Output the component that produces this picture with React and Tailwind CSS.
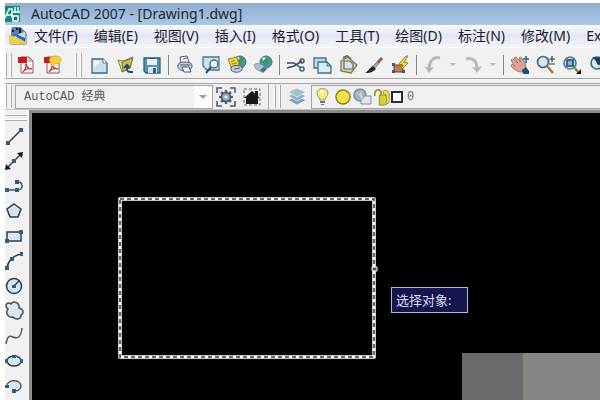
import React from "react";

function Icon({ children, size = "w-5 h-5" }) {
  return (
    <svg viewBox="0 0 20 20" className={size + " shrink-0"} fill="none" aria-hidden="true">
      {children}
    </svg>
  );
}

function Tool({ label, children }) {
  return (
    <button type="button" aria-label={label} className="flex h-6 w-[26px] shrink-0 items-center justify-center">
      <Icon>{children}</Icon>
    </button>
  );
}

function Grip() {
  return (
    <div className="flex w-2 shrink-0 gap-[3px] self-stretch py-px">
      <span className="w-[2px] border-l border-white bg-[#a9a9a9]" />
      <span className="w-[2px] border-l border-white bg-[#a9a9a9]" />
    </div>
  );
}

function Divider() {
  return (
    <div className="flex w-[7px] shrink-0 justify-center">
      <span className="h-5 w-px bg-[#858585]" />
    </div>
  );
}

function Drop({ label }) {
  return (
    <button type="button" aria-label={label} className="flex h-6 w-[14px] shrink-0 items-center justify-center">
      <svg viewBox="0 0 6 4" className="h-1 w-[6px]"><path d="M0 0h6L3 3z" fill="#b5b5b5" /></svg>
    </button>
  );
}

const blue = "#2f5f80";
const dark = "#303b45";

function Printer() {
  return (
    <g stroke="#505b6b">
      <path d="M6 8 5 2l7-1 2 6" fill="#f7faff" />
      <path d="M3 10c1-3 4-3 7-3 4 0 7 1 7 4s-3 5-7 5-8-2-7-6Z" fill="#bccbdc" />
      <path d="M7 12h7l2 5H9z" fill="#eef3fa" />
      <path d="M5 10h10M8 4l4-1" />
    </g>
  );
}

function Pdf() {
  return (
    <g>
      <path d="M5 2h8l4 4v12H5z" fill="#fff" stroke="#8b5a5a" />
      <path d="M13 2v4h4" stroke="#777" />
      <path d="M2 2h9v6H2z" fill="#c9171d" />
      <path d="M7 17c3-3 4-8 3-8s1 5 6 5c-3-1-7 0-9 3Z" stroke="#d22a2a" strokeWidth="1.3" />
    </g>
  );
}

function Globe() {
  return (
    <g>
      <circle cx="13" cy="7" r="6" fill="#4e93a5" stroke="#496d84" />
      <path d="M10 3c3-2 7 0 6 3l-3 5c-3 0-1-3-4-4 0-2 0-3 1-4Z" fill="#429356" />
      <path d="M9 3c1-1 3-1 4 0l-3 3z" fill="#d5edec" />
    </g>
  );
}

const menus = ["文件(F)", "编辑(E)", "视图(V)", "插入(I)", "格式(O)", "工具(T)", "绘图(D)", "标注(N)", "修改(M)", "Ex"];

function TitleBar() {
  return (
    <header className="flex h-[22px] items-center gap-[10px] bg-gradient-to-b from-[#8eadd0] to-[#acc8e3]">
      <svg viewBox="0 0 16 16" className="h-4 w-4 shrink-0" aria-hidden="true">
        <path d="M0 0h15v16H0z" fill="#17877e" />
        <path d="M0 12 4 3h3v9M2 9h5M10 1v6M13 1v6M8 6h7" stroke="#e9fffa" strokeWidth="1.5" fill="none" />
        <path d="M8 10h5v5H8z" fill="#126d68" stroke="#fff" strokeWidth="1.5" />
      </svg>
      <h1 className="text-sm whitespace-nowrap text-[#1b2634]">AutoCAD 2007 - [Drawing1.dwg]</h1>
    </header>
  );
}

function MenuBar() {
  return (
    <nav className="flex h-[22px] items-center bg-gradient-to-b from-[#f8fafd] via-[#e3e7f6] to-[#f3f4fa] pl-[3px]">
      <svg viewBox="0 0 20 20" className="h-5 w-5 shrink-0" aria-hidden="true">
        <path d="M4 2h9l5 5v11H3z" fill="#c5dbec" stroke="#667" />
        <path d="M4 1h8l4 5-5 2-7 4z" fill="#5b7ea8" />
        <path d="M4 5h2M8 3h2M12 2v5" stroke="#101c34" strokeWidth="2" />
        <path d="M1 9c5 0 6 4 11 4l6 1v4H1z" fill="#ead04a" />
        <path d="M6 8c5 0 7 3 11 4v4C13 12 9 13 6 8Z" fill="#2267a6" />
      </svg>
      <ul className="flex gap-4 pl-[6px] text-sm whitespace-nowrap text-[#1c1c28]">
        {menus.map((m) => (
          <li key={m}><button type="button" className="block leading-5">{m}</button></li>
        ))}
      </ul>
    </nav>
  );
}

function StandardBar() {
  return (
    <div role="toolbar" aria-label="标准" className="flex h-8 shrink-0 items-center border-t border-b border-t-[#fdfdfd] border-b-[#a5a5a5] bg-[#f1f1f1] pt-[4px]">
      <Grip />
      <Tool label="PDF"><Pdf /></Tool>
      <Tool label="PDF 注释">
        <Pdf />
        <path d="M9 2c4-2 10-1 10 3s-5 4-7 4l-3 3V8C7 6 7 4 9 2Z" fill="#f3cf3f" stroke="#ddb22c" />
      </Tool>
      <span className="mr-[5px] ml-[5px] w-px self-stretch bg-[#a9a9a9]" />
      <Grip />
      <div className="w-1 shrink-0" />
      <Tool label="新建">
        <path d="M2 4h11l4 4v10H2z" fill="#c6e2ef" stroke="#3d6986" strokeWidth="1.3" />
        <path d="M13 4v4h4" fill="#fff" stroke="#5b8199" />
        <path d="M4 6h6L4 13z" fill="#f0faff" />
      </Tool>
      <Tool label="打开">
        <path d="m2 5 5 1 10-4-3 11-8 4z" fill="#e4d985" stroke="#8b8443" />
        <path d="m6 7 11-4-3 9-7 5z" fill="#c3c063" stroke="#77783a" />
        <path d="M17 17h-3c-3 0-3-2-3-5M8 13l3-3 3 3" stroke="#264a60" strokeWidth="2" />
      </Tool>
      <Tool label="保存">
        <path d="M2 3h16v15H4l-2-2z" fill="#5692b5" stroke="#315f80" strokeWidth="1.3" />
        <path d="M5 4h10v6H5z" fill="#e6f2f7" />
        <path d="M6 12h9v6H6z" fill="#d2e5ef" />
        <path d="M11 13h3v5h-3z" fill="#315f80" />
      </Tool>
      <Divider />
      <Tool label="打印"><Printer /></Tool>
      <Tool label="打印预览">
        <path d="M2 2h16v13H6l-4-4z" fill="#c9e0ee" stroke="#4d7491" strokeWidth="1.3" />
        <circle cx="13" cy="9" r="4" fill="#e8f7fd" stroke="#44708d" strokeWidth="1.5" />
        <path d="m10 12-5 6" stroke="#315067" strokeWidth="2" />
      </Tool>
      <Tool label="发布">
        <Globe />
        <path d="m1 4 9-2 2 8-8 2z" fill="#ead342" stroke="#9c8926" />
        <path d="m4 7 4-2M5 9l5-1" stroke="#a28e27" />
        <path d="M4 12c3-2 8-2 11 0v3c-3 3-8 3-11 0z" fill="#c3cedc" stroke="#505b6b" />
        <path d="m7 14 6-1" stroke="#505b6b" />
      </Tool>
      <Tool label="三维 DWF">
        <Globe />
        <path d="M1 10c3-3 9-1 11 3l-3 4-6-3z" fill="#aebfd1" stroke="#8798aa" />
        <path d="m7 15 4-3 3 2-4 4z" fill="#536c84" />
      </Tool>
      <Divider />
      <Tool label="剪切">
        <path d="M1 8h7l7 5M1 13l7-2 8-5" stroke="#3e4854" strokeWidth="1.5" />
        <circle cx="16" cy="6" r="2" stroke="#3c5871" strokeWidth="1.5" />
        <circle cx="16" cy="14" r="2" stroke="#3c5871" strokeWidth="1.5" />
      </Tool>
      <Tool label="复制">
        <path d="M2 3h12v10H2z" fill="#b9dce8" stroke="#3d7189" strokeWidth="1.3" />
        <path d="M6 7h9l4 4v7H6z" fill="#d6edf4" stroke="#3d7189" strokeWidth="1.3" />
        <path d="M15 7v4h4" stroke="#3d7189" />
      </Tool>
      <Tool label="粘贴">
        <path d="m3 6 7-4 9 8-6 8-10-2z" fill="#dcd5a2" stroke="#807b56" strokeWidth="1.3" />
        <path d="m5 3 4-2 4 3" stroke="#6f705e" strokeWidth="2" />
        <path d="M6 6h6l3 3v5H6z" fill="#d3e6e6" stroke="#596d6c" strokeWidth="1.2" />
      </Tool>
      <Tool label="特性匹配">
        <path d="m18 3-8 9" stroke="#896244" strokeWidth="3" />
        <path d="m13 7-4 5 2 2 4-5z" fill="#9ba8b1" />
        <path d="m9 11 3 3c-4 4-7 4-11 4 3-1 4-5 8-7Z" fill="#26272b" />
      </Tool>
      <Tool label="块编辑器">
        <path d="M4 10h9v7H4z" fill="#c9774c" stroke="#633c39" />
        <path d="m16 1-7 8 4 1-3 6 8-8-4-1 4-6z" fill="#f4d841" stroke="#9b8429" />
        <path d="M2 8h3v3H2zM2 15h3v3H2zM12 15h3v3h-3z" fill={blue} />
      </Tool>
      <Divider />
      <Tool label="放弃">
        <path d="M17 3C10 1 6 7 6 14" stroke="#b8b8b8" strokeWidth="3" />
        <path d="m1 11 5 7 5-6-5 1z" fill="#b5b5b5" />
      </Tool>
      <Drop label="放弃列表" />
      <Tool label="重做">
        <path d="M3 4c8-2 11 3 11 10" stroke="#b8b8b8" strokeWidth="3" />
        <path d="m9 12 5 6 5-7-5 2z" fill="#b5b5b5" />
      </Tool>
      <Drop label="重做列表" />
      <Divider />
      <Tool label="实时平移">
        <path d="M2 7 1 5l2-1 5 4-4-5 2-1 5 5-2-4 2-1 4 6 1 6-4 3c-4 0-8-2-11-6l1-2 3 2z" fill="#dda397" stroke="#a87671" />
        <path d="m12 15 4-3 3 4v3h-6z" fill="#244e78" />
        <path d="M16 1v7M13 4h6" stroke={blue} strokeWidth="1.5" />
      </Tool>
      <Tool label="实时缩放">
        <circle cx="7" cy="7" r="5.5" fill="#d1e8f2" stroke="#476a7c" strokeWidth="1.7" />
        <path d="m11 11 6 7" stroke="#9b7f45" strokeWidth="2.5" />
        <path d="M16 1v6M13 4h6M13 9h6" stroke={dark} strokeWidth="1.2" />
      </Tool>
      <Tool label="窗口缩放">
        <circle cx="8" cy="8" r="6" fill="#c2deeb" stroke="#557b8d" strokeWidth="1.6" />
        <path d="M5 5h6v6H5z" fill="#8fb5cd" stroke="#244c70" strokeWidth="1.6" />
        <path d="m12 12 4 5" stroke="#9b7f45" strokeWidth="2.5" />
        <path d="M19 14v5h-5z" fill="#111" />
      </Tool>
      <Tool label="缩放上一个">
        <circle cx="9" cy="8" r="6" fill="#d9eaf1" stroke="#476a7c" strokeWidth="1.7" />
        <path d="M6 3h7v7zM8 5l3 5" fill="#16416a" stroke="#16416a" strokeWidth="1.5" />
        <path d="m13 12 5 6" stroke="#9b7f45" strokeWidth="2.5" />
      </Tool>
    </div>
  );
}

function WorkspaceBar() {
  return (
    <div role="toolbar" aria-label="工作空间" className="mt-1 flex h-[26px] shrink-0 items-center border-t border-t-[#a5a5a5] bg-[#efefef]">
      <Grip />
      <div className="ml-[2px] flex h-6 w-[198px] shrink-0 items-center border border-[#a5a5a5] bg-[#f0f0f0]">
        <select
          aria-label="工作空间"
          className="h-full flex-1 appearance-none pl-2 font-['Liberation_Mono','Noto_Sans_CJK_SC',monospace] text-xs text-[#5c5c5c] outline-none"
        >
          <option>AutoCAD 经典</option>
        </select>
        <span className="flex h-full w-[18px] items-center justify-center bg-[#fbfbfb]">
          <svg viewBox="0 0 8 4" className="h-1 w-2" aria-hidden="true"><path d="M0 0h8L4 4z" fill="#a2a2a2" /></svg>
        </span>
      </div>
      <Tool label="工作空间设置">
        <path d="M1 6V1h5M14 1h5v5M19 14v5h-5M6 19H1v-5" stroke="#4d5866" strokeWidth="1.5" />
        <path d="M10 3v14M3 10h14M5 5l10 10M15 5 5 15" stroke="#52677a" strokeWidth="2.5" />
        <circle cx="10" cy="10" r="4.5" fill="#93adbf" stroke="#3d5163" strokeWidth="1.5" />
        <circle cx="10" cy="10" r="1.5" fill="#eee" />
      </Tool>
      <Tool label="我的工作空间">
        <path d="M2 2h16v16H2z" stroke="#666" strokeDasharray="3 2" />
        <path d="m2 11 8-7 8 7h-2v6H4v-6z" fill="#171719" />
        <path d="M13 4h3v5h-3z" fill="#171719" />
      </Tool>
      <span className="mr-[5px] ml-[3px] w-px self-stretch bg-[#a9a9a9]" />
      <Grip />
      <div className="w-[2px] shrink-0" />
      <Tool label="图层特性管理器">
        <path d="m1 13 9-4 9 4-9 5z" fill="#7f9fb9" stroke="#f3f8fc" strokeWidth="0.7" />
        <path d="m1 9 9-4 9 4-9 5z" fill="#8eacc4" stroke="#f3f8fc" strokeWidth="0.7" />
        <path d="m1 5 9-4 9 4-9 5z" fill="#a5bfd3" stroke="#f3f8fc" strokeWidth="0.7" />
      </Tool>
      <div className="ml-px flex h-6 min-w-0 flex-1 items-center overflow-hidden border border-r-0 border-[#a5a5a5] bg-[#f0f0f0] pl-px">
        <Icon>
          <path d="M7 13c0-3-3-3-3-7 0-6 11-6 11 0 0 4-3 4-3 7z" fill="#fae78a" stroke="#a59552" />
          <path d="M7 14h5v2H7zM8 17h3v1H8z" fill="#6c7483" />
          <path d="M7 4c1-1 2-1 3-1v7z" fill="#fffce2" />
        </Icon>
        <Icon>
          <circle cx="10" cy="10" r="7" fill="#f0e342" stroke="#888425" strokeWidth="1.5" />
        </Icon>
        <Icon>
          <circle cx="7" cy="8" r="6" fill="#9fb6c2" stroke="#7b929f" strokeWidth="1.5" />
          <path d="M13 9h5v8H8v-3" fill="#e1e8ec" stroke="#7b929f" />
          <path d="m4 6 6 4M8 4v8" stroke="#d7e2e8" />
        </Icon>
        <Icon size="h-5 w-[18px]">
          <path d="M2 9V6c0-5 7-5 7 0v4" stroke="#a9a032" strokeWidth="2.2" />
          <path d="M7 8h9v9l-3 2H7z" fill="#d9cf3c" stroke="#8c8427" />
          <path d="M11 4c3-3 7-1 7 3v9l-3 2V8l-3-1z" fill="#e8df60" stroke="#9a912f" />
        </Icon>
        <span className="h-3 w-3 shrink-0 border-2 border-[#2d2d2d] bg-white" />
        <select
          aria-label="图层"
          className="h-full flex-1 appearance-none pl-1 font-['Liberation_Mono',monospace] text-xs text-[#6c6c6c] outline-none"
        >
          <option>0</option>
        </select>
      </div>
    </div>
  );
}

function DrawTool({ label, children }) {
  return (
    <button type="button" aria-label={label} className="flex h-[25px] w-full items-center">
      <Icon>{children}</Icon>
    </button>
  );
}

function DrawBar() {
  return (
    <aside role="toolbar" aria-label="绘图" className="w-6 shrink-0 bg-[#f1f1f1]">
      <div className="flex h-[13px] flex-col gap-[3px] pt-[4px] pr-[2px]">
        <span className="h-[2px] border-t border-white bg-[#a9a9a9]" />
        <span className="h-[2px] border-t border-white bg-[#a9a9a9]" />
      </div>
      <DrawTool label="直线">
        <path d="M3 17 16 4" stroke={dark} strokeWidth="1.5" />
        <path d="M1 15h4v4H1zM14 2h4v4h-4z" fill={blue} />
      </DrawTool>
      <DrawTool label="构造线">
        <path d="M2 17 16 3" stroke={dark} strokeWidth="1.5" />
        <path d="m12 2 6-1-1 6zM1 13l5 5-6 1z" fill="#16191c" />
        <path d="M7 8h4v4H7z" fill={blue} />
      </DrawTool>
      <DrawTool label="多段线">
        <path d="M1 14h12c6-1 5-8 0-8" stroke={blue} strokeWidth="1.5" />
        <path d="M0 12h4v4H0zM10 12h4v4h-4zM10 4h4v4h-4z" fill={blue} />
      </DrawTool>
      <DrawTool label="正多边形">
        <path d="m9 3 7 5-3 8H5L2 8z" fill="#d6e4ee" stroke={dark} strokeWidth="1.5" />
      </DrawTool>
      <DrawTool label="矩形">
        <path d="M2 6h14v9H2z" fill="#dce7f0" stroke={dark} strokeWidth="1.5" />
        <path d="M0 13h4v4H0zM14 4h4v4h-4z" fill={blue} />
      </DrawTool>
      <DrawTool label="圆弧">
        <path d="M2 17C3 10 8 4 17 3" stroke={dark} strokeWidth="1.5" />
        <path d="M0 15h4v4H0zM5 6h4v4H5zM15 1h3v4h-3z" fill={blue} />
      </DrawTool>
      <DrawTool label="圆">
        <circle cx="9" cy="10" r="7.5" fill="#d3e8f2" stroke={dark} strokeWidth="1.5" />
        <path d="m9 10 5-5" stroke={dark} strokeWidth="1.5" />
        <path d="M7 9h4v3H7z" fill={blue} />
      </DrawTool>
      <DrawTool label="修订云线">
        <path d="M3 8C-1 5 2 0 6 3c3-4 9-1 8 4 5 1 5 6 2 7 0 5-6 5-8 2-5 1-8-4-5-8Z" fill="#d6e7f0" stroke="#47525d" strokeWidth="1.5" />
      </DrawTool>
      <DrawTool label="样条曲线">
        <path d="M1 18C2 11 4 9 8 11s8 1 9-9" stroke="#555d65" strokeWidth="1.5" />
      </DrawTool>
      <DrawTool label="椭圆">
        <ellipse cx="9" cy="10" rx="7" ry="5" fill="#d3e8f2" stroke={dark} strokeWidth="1.5" />
        <path d="M0 8h3v4H0zM15 8h3v4h-3zM7 4h4v3H7z" fill={blue} />
      </DrawTool>
      <DrawTool label="椭圆弧">
        <path d="M2 10c0-7 14-7 14 0 0 3-3 5-7 5" fill="#d3e8f2" stroke="#4d5964" strokeWidth="1.5" />
        <path d="M0 9h4v3H0zM7 13h4v4H7z" fill={blue} />
      </DrawTool>
    </aside>
  );
}

function Canvas() {
  return (
    <main className="relative min-w-0 flex-1 overflow-hidden border-t-[3px] border-l-[3px] border-[#8b8b8b] bg-black">
      <svg viewBox="0 0 262 162" className="absolute top-[84px] left-[86px] h-[162px] w-[262px]" fill="none" role="img" aria-label="矩形">
        <rect x="2" y="2" width="254" height="158" rx="1" stroke="#8a8a8a" strokeWidth="4" />
        <rect x="2" y="2" width="254" height="158" stroke="#fff" strokeWidth="3" />
        <rect x="2" y="2" width="254" height="158" stroke="#303030" strokeWidth="1.5" strokeDasharray="4 3" />
        <path d="M254 70h5v4h-5z" fill="#555" stroke="#fff" />
      </svg>
      <div className="absolute top-[174px] left-[359px] border border-[#b9b9d2] bg-[#15154f] py-[2px] pr-4 pl-1 text-[13px] leading-5 whitespace-nowrap text-[#dcdcf2]">
        选择对象:
      </div>
      <div className="absolute right-0 bottom-0 flex h-[47px]">
        <span className="w-[61px] bg-[#6c696b]" />
        <span className="w-[60px] bg-[#868581]" />
        <span className="w-[17px] bg-[#858585]" />
      </div>
    </main>
  );
}

export default function App() {
  return (
    <div className="h-screen overflow-hidden bg-white pt-[3px] pl-[5px] font-['Noto_Sans','Noto_Sans_CJK_SC',sans-serif]">
      <div className="flex h-full flex-col overflow-hidden bg-[#f3f3f3]">
        <TitleBar />
        <MenuBar />
        <StandardBar />
        <WorkspaceBar />
        <div className="flex min-h-0 flex-1 border-t border-[#c4c4c4]">
          <DrawBar />
          <Canvas />
        </div>
      </div>
    </div>
  );
}
